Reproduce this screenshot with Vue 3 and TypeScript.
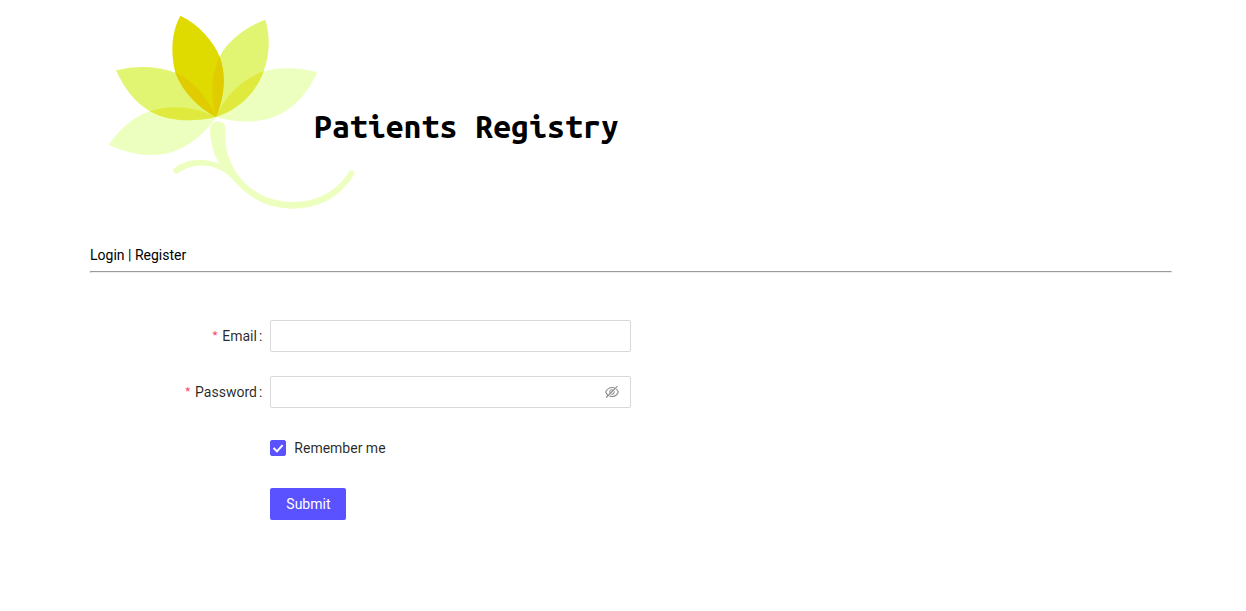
<script setup lang="ts">
import { ref } from 'vue'

const email = ref('')
const password = ref('')
const remember = ref(true)
const showPassword = ref(false)

const petals = {
  center: 'M271 47C330 75 370 125 389 170C407 220 407 280 378 351C330 325 280 280 256 218C241 160 244 95 271 47Z',
  left: 'M78 211C140 195 205 198 256 218C310 240 350 290 378 351C310 366 240 367 180 334C135 308 102 265 78 211Z',
  right: 'M526 59C465 82 415 120 389 170C365 220 360 285 378 351C440 330 495 285 521 214C541 160 540 105 526 59Z',
  lowRight: 'M682 217C625 201 570 201 521 214C460 235 405 285 378 351C435 368 500 371 560 348C620 320 655 275 682 217Z',
  lowLeft: 'M56 434C88 388 130 350 180 334C240 313 315 318 378 351C345 400 300 440 235 460C175 473 110 460 56 434Z',
}
</script>

<template>
  <div class="page">
    <header class="banner">
      <svg class="logo" viewBox="0 0 840 660" aria-hidden="true">
        <defs>
          <clipPath id="clip-center"><path :d="petals.center" /></clipPath>
          <clipPath id="clip-left"><path :d="petals.left" /></clipPath>
          <clipPath id="clip-right"><path :d="petals.right" /></clipPath>
        </defs>
        <g fill="#edffbf">
          <path :d="petals.lowLeft" />
          <path :d="petals.lowRight" />
          <path
            d="M360 388C360 357 406 357 406 384C403 430 410 465 430 502C462 565 530 606 610 606C680 604 740 575 777 515C784 506 797 514 792 524C750 590 690 626 604 626C525 624 470 590 425 535C380 490 315 485 264 519C253 526 243 511 253 504C295 475 340 473 388 492C370 460 360 425 360 388Z"
          />
        </g>
        <g fill="#e2f572">
          <path :d="petals.left" />
          <path :d="petals.right" />
        </g>
        <g fill="#e0ea3e">
          <path :d="petals.lowLeft" clip-path="url(#clip-left)" />
          <path :d="petals.lowRight" clip-path="url(#clip-right)" />
        </g>
        <path :d="petals.center" fill="#dfdb00" />
        <g fill="#e0cc00">
          <path :d="petals.left" clip-path="url(#clip-center)" />
          <path :d="petals.right" clip-path="url(#clip-center)" />
        </g>
      </svg>
      <h1 class="title">Patients Registry</h1>
    </header>

    <nav class="nav"><a href="#login">Login</a> | <a href="#register">Register</a></nav>
    <hr class="rule" />

    <form class="form" @submit.prevent>
      <label class="label" for="email"><span class="star">*</span>Email<span class="colon">:</span></label>
      <input id="email" v-model="email" class="input" type="text" />

      <label class="label" for="password"><span class="star">*</span>Password<span class="colon">:</span></label>
      <div class="input password">
        <input id="password" v-model="password" :type="showPassword ? 'text' : 'password'" />
        <button class="eye" type="button" aria-label="Toggle password visibility" @click="showPassword = !showPassword">
          <svg viewBox="64 64 896 896" aria-hidden="true">
            <path
              d="M942.2 486.2Q889.47 375.11 816.7 305l-50.88 50.88C807.31 395.53 843.45 447.4 874.7 512 791.5 684.2 673.4 766 512 766q-72.67 0-133.87-22.38L323 798.75Q408 838 512 838q288.3 0 430.2-300.3a60.29 60.29 0 000-51.5zm-63.57-320.64L836 122.88a8 8 0 00-11.32 0L715.31 232.2Q624.86 186 512 186q-288.3 0-430.2 300.3a60.3 60.3 0 000 51.5q56.69 119.4 136.5 191.41L112.48 835a8 8 0 000 11.31L155.17 889a8 8 0 0011.31 0l712.15-712.12a8 8 0 000-11.32zM149.3 512C232.6 339.8 350.7 258 512 258c54.54 0 104.13 9.36 149.12 28.39l-70.3 70.3a176 176 0 00-238.13 238.13l-83.42 83.42C223.1 637.49 183.3 582.28 149.3 512zm246.7 0a112.11 112.11 0 01146.2-106.69L401.31 546.2A112 112 0 01396 512z"
            />
            <path
              d="M508 624c-3.46 0-6.87-.16-10.25-.47l-52.82 52.82a176.09 176.09 0 00227.42-227.42l-52.82 52.82c.31 3.38.47 6.79.47 10.25a111.94 111.94 0 01-112 112z"
            />
          </svg>
        </button>
      </div>

      <label class="remember" for="remember">
        <span class="tick">
          <input id="remember" v-model="remember" type="checkbox" />
          <svg v-if="remember" viewBox="0 0 16 16" aria-hidden="true">
            <path d="M3.6 8 7 11.4 12.6 5.2" fill="none" stroke="#fff" stroke-width="2" />
          </svg>
        </span>
        Remember me
      </label>

      <button class="submit" type="submit">Submit</button>
    </form>
  </div>
</template>

<style>
body {
  background: #fff;
}
</style>

<style scoped>
.page {
  padding: 0 74px 0 90px;
  font: 14px/22px Roboto, "Liberation Sans", sans-serif;
  color: rgba(0, 0, 0, 0.85);
}
.banner {
  display: flex;
  align-items: center;
  padding-bottom: 24px;
}
.logo {
  flex: none;
  width: 280px;
  height: 220px;
}
.title {
  margin: 32px 0 0 -56px;
  font: bold 32px/36px "Ubuntu Mono", "DejaVu Sans Mono", monospace;
  color: #000;
}
.nav,
.nav a {
  color: #000;
  text-decoration: none;
}
.rule {
  margin: 5px 0 47px;
}
.form {
  display: grid;
  grid-template-columns: 4fr 8fr 12fr;
  row-gap: 24px;
}
.label {
  grid-column: 1;
  display: flex;
  justify-content: flex-end;
  align-items: center;
  height: 32px;
}
.star {
  margin-right: 4px;
  font: 14px/14px "Noto Sans CJK SC", sans-serif;
  color: #ff4d6f;
}
.colon {
  margin: 0 8px 0 2px;
}
.input {
  grid-column: 2;
  box-sizing: border-box;
  width: 100%;
  height: 32px;
  padding: 4px 11px;
  border: 1px solid #d9d9d9;
  border-radius: 2px;
  background: #fff;
  font: inherit;
  color: inherit;
}
.password {
  display: flex;
  align-items: center;
}
.password input {
  flex: 1;
  min-width: 0;
  padding: 0;
  border: 0;
  outline: 0;
  background: none;
  font: inherit;
}
.eye {
  display: flex;
  padding: 0;
  border: 0;
  background: none;
  cursor: pointer;
}
.eye svg {
  width: 14px;
  height: 14px;
  fill: rgba(0, 0, 0, 0.45);
}
.remember {
  grid-column: 2;
  justify-self: start;
  display: flex;
  align-items: center;
  gap: 8px;
  height: 32px;
}
.tick {
  display: grid;
  width: 16px;
  height: 16px;
}
.tick input {
  grid-area: 1 / 1;
  appearance: none;
  width: 16px;
  height: 16px;
  margin: 0;
  border: 1px solid #d9d9d9;
  border-radius: 2px;
}
.tick input:checked {
  border-color: #5b52ff;
  background: #5b52ff;
}
.tick svg {
  grid-area: 1 / 1;
  width: 16px;
  height: 16px;
  pointer-events: none;
}
.submit {
  grid-column: 2;
  justify-self: start;
  height: 32px;
  padding: 0 16px;
  border: 0;
  border-radius: 2px;
  background: #5b52ff;
  box-shadow: 0 2px 0 rgba(0, 0, 0, 0.04);
  font: inherit;
  color: #fff;
  cursor: pointer;
}
</style>
